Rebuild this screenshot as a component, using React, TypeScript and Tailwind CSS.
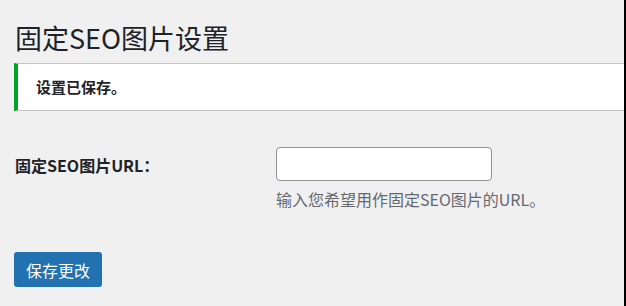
export default function App() {
  return (
    <div
      className="w-[626px] h-[306px] bg-[#f0f0f1] border-r-2 border-black overflow-hidden text-[#1d2327]"
      style={{ fontFamily: '"Microsoft YaHei", "Noto Sans CJK SC", "Noto Sans", sans-serif' }}
    >
      <div className="pl-[14px] pt-[20px]">
        <h1 className="pl-px text-[27px] leading-[36px] font-normal">固定SEO图片设置</h1>

        {/* Saved notice */}
        <div className="mt-[7px] h-[48px] bg-white border border-[#c3c4c7] border-l-4 border-l-[#00a32a] border-r-0 flex items-center pl-[18px]">
          <p className="text-[15px] font-semibold">设置已保存。</p>
        </div>

        {/* Form table */}
        <div className="mt-[36px] flex">
          <div className="w-[262px] pl-px pt-[8px] text-[16px] font-bold leading-[20px]">
            固定SEO图片URL：
          </div>
          <div className="flex flex-col">
            <input
              type="text"
              className="w-[216px] h-[34px] bg-white border border-[#8c8f94] rounded-[4px] px-2 outline-none"
            />
            <p className="mt-[6px] text-[16px] leading-[24px] text-[#646970]">
              输入您希望用作固定SEO图片的URL。
            </p>
          </div>
        </div>

        <button className="mt-[41px] h-[35px] px-[12px] bg-[#2271b1] text-white text-[16px] rounded-[3px]">
          保存更改
        </button>
      </div>
    </div>
  );
}
